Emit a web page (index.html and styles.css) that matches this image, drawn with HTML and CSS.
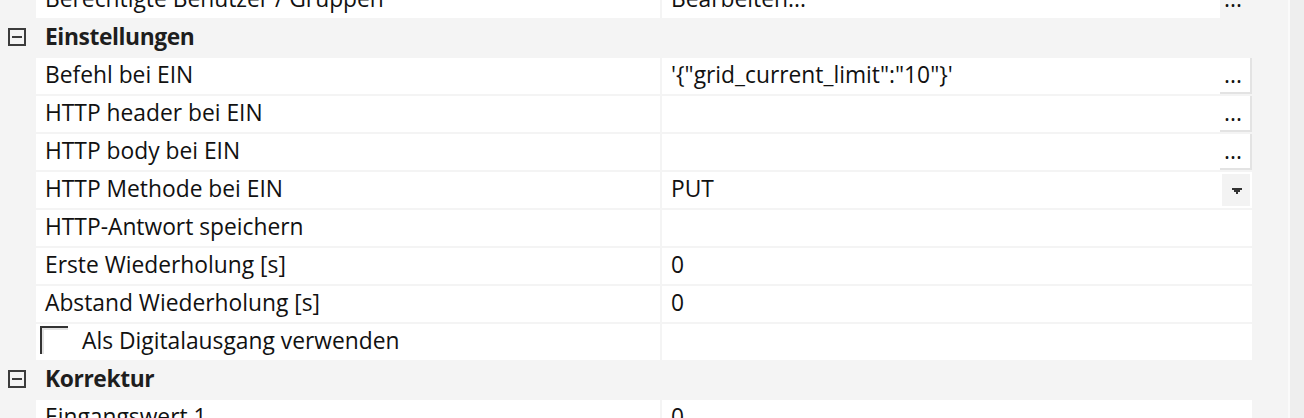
FILE: index.html
```html
<!DOCTYPE html>
<html lang="de">
<head>
<meta charset="utf-8">
<title>Eigenschaften</title>
<link rel="stylesheet" href="styles.css">
</head>
<body>
<div class="page">
  <div class="grid">
    <div class="row">
      <div class="gutter"></div>
      <div class="name">Berechtigte Benutzer / Gruppen</div>
      <div class="value"><span class="text">Bearbeiten...</span><span class="btn flat">...</span></div>
    </div>

    <div class="row cat">
      <div class="gutter"><svg class="toggle" width="18" height="18" viewBox="0 0 18 18"><rect x="1" y="1" width="16" height="16" fill="none" stroke="#3c3c3c" stroke-width="2"/><line x1="4" y1="9" x2="14" y2="9" stroke="#3c3c3c" stroke-width="2"/></svg></div>
      <div class="cat-name">Einstellungen</div>
    </div>

    <div class="row">
      <div class="gutter"></div>
      <div class="name">Befehl bei EIN</div>
      <div class="value"><span class="text">'{"grid_current_limit":"10"}'</span><span class="btn">...</span></div>
    </div>
    <div class="row">
      <div class="gutter"></div>
      <div class="name">HTTP header bei EIN</div>
      <div class="value"><span class="text"></span><span class="btn">...</span></div>
    </div>
    <div class="row">
      <div class="gutter"></div>
      <div class="name">HTTP body bei EIN</div>
      <div class="value"><span class="text"></span><span class="btn">...</span></div>
    </div>
    <div class="row">
      <div class="gutter"></div>
      <div class="name">HTTP Methode bei EIN</div>
      <div class="value"><span class="text">PUT</span><span class="drop"><svg width="10" height="6" viewBox="0 0 10 6"><path d="M0 0H10V2H8V4H6V6H4V4H2V2H0Z" fill="#333"/></svg></span></div>
    </div>
    <div class="row">
      <div class="gutter"></div>
      <div class="name">HTTP-Antwort speichern</div>
      <div class="value"><span class="text"></span></div>
    </div>
    <div class="row">
      <div class="gutter"></div>
      <div class="name">Erste Wiederholung [s]</div>
      <div class="value"><span class="text">0</span></div>
    </div>
    <div class="row">
      <div class="gutter"></div>
      <div class="name">Abstand Wiederholung [s]</div>
      <div class="value"><span class="text">0</span></div>
    </div>
    <div class="row">
      <div class="gutter"></div>
      <div class="name with-check"><span class="check"></span><span>Als Digitalausgang verwenden</span></div>
      <div class="value"><span class="text"></span></div>
    </div>

    <div class="row cat">
      <div class="gutter"><svg class="toggle" width="18" height="18" viewBox="0 0 18 18"><rect x="1" y="1" width="16" height="16" fill="none" stroke="#3c3c3c" stroke-width="2"/><line x1="4" y1="9" x2="14" y2="9" stroke="#3c3c3c" stroke-width="2"/></svg></div>
      <div class="cat-name">Korrektur</div>
    </div>

    <div class="row">
      <div class="gutter"></div>
      <div class="name">Eingangswert 1</div>
      <div class="value"><span class="text">0</span></div>
    </div>
  </div>
  <div class="vscroll"><div class="track"></div></div>
</div>
</body>
</html>
```
FILE: styles.css
```css
html, body {
  margin: 0;
  padding: 0;
  height: 100%;
  overflow: hidden;
  background: #f4f4f4;
}

.page {
  display: flex;
  height: 418px;
  overflow: hidden;
  font-family: "Open Sans", "Noto Sans", sans-serif;
  font-size: 22.8px;
  color: #111;
}

.grid {
  width: 1252px;
  flex: none;
  display: flex;
  flex-direction: column;
  gap: 2px;
  margin-top: -18px;
}

.row {
  display: flex;
  height: 36px;
  flex: none;
}

.gutter {
  width: 36px;
  flex: none;
}

.name {
  width: 624px;
  flex: none;
  box-sizing: border-box;
  background: #fff;
  padding: 1px 0 3px 9px;
  line-height: 32px;
  white-space: nowrap;
  overflow: hidden;
}

.with-check {
  display: flex;
  align-items: flex-start;
  padding-left: 4px;
  padding-top: 0;
}

.with-check > span:last-child {
  padding-top: 1px;
}

.check {
  width: 28px;
  height: 28px;
  box-sizing: border-box;
  margin: 2px 14px 0 0;
  border-top: 2px solid #333;
  border-left: 2px solid #333;
  box-shadow: inset 2px 2px 0 #e3e3e3;
  flex: none;
}

.value {
  margin-left: 2px;
  flex: 1;
  display: flex;
  background: #fff;
  min-width: 0;
}

.value .text {
  flex: 1;
  padding: 1px 0 3px 9px;
  line-height: 32px;
  white-space: nowrap;
  overflow: hidden;
}

.btn {
  flex: none;
  background: #fff;
  border-right: 2px solid #e3e3e3;
  border-bottom: 2px solid #e3e3e3;
  padding: 1px 0 1px 4px;
  box-sizing: content-box;
  width: 26px;
  height: 32px;
  line-height: 32px;
  overflow: hidden;
}

.btn.flat {
  background: #f4f4f4;
  border-color: #f4f4f4;
}

.drop {
  width: 28px;
  height: 32px;
  margin: 2px 2px 2px 0;
  background: #f3f3f3;
  flex: none;
  box-sizing: border-box;
  padding: 14px 0 0 10px;
  display: flex;
  align-items: flex-start;
}

.drop svg {
  display: block;
}

.cat {
  background: #f4f4f4;
}

.cat .toggle {
  display: block;
  margin: 8px 0 0 8px;
}

.cat-name {
  flex: 1;
  font-weight: 700;
  letter-spacing: -0.4px;
  padding: 1px 0 3px 9px;
  line-height: 32px;
  color: #1e1e1e;
}

.vscroll {
  flex: 1;
  display: flex;
  justify-content: flex-end;
}

.track {
  width: 14px;
  border-left: 2px solid #fafafa;
  background: #eeeeee;
}
```
